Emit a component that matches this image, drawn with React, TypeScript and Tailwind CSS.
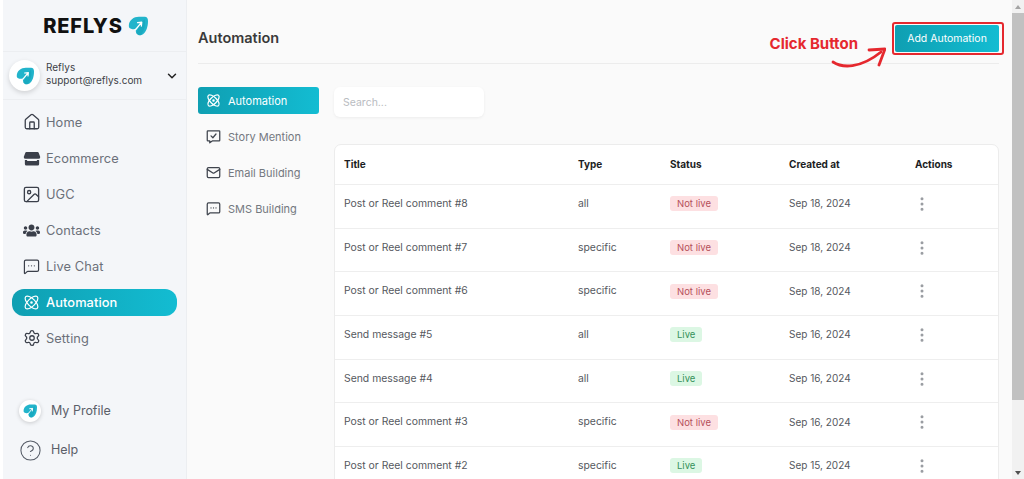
import React from 'react';
import { House, Image, MessageSquareMore, Atom, Settings, ChevronDown, Mail, CircleHelp, EllipsisVertical } from 'lucide-react';
import { FaUsers } from 'react-icons/fa';

const font = "font-['Inter','Noto_Sans',sans-serif]";

type IconProps = { size?: number; strokeWidth?: number; className?: string };

const Mark: React.FC<{ size: number }> = ({ size }) => (
  <svg width={size} height={size} viewBox="0 0 24 24">
    <path d="M1 12C1 5 7 1 13 1L20 1C23 1 24 3 24 6C24 13 22 19 18 22C15 24 10 23.500 9.500 19C9 16.500 9 16 10 15C8 16 6 16 4.500 15.500C2 15 1 14 1 12Z" fill="#22b4cb" />
    <path d="M14 10 20 3.500C21.500 11 19 18 15.500 23C13 23.500 10.500 22 9.800 20C11.500 17 13.500 14 14 10Z" fill="#0f9db3" opacity="0.45" />
    <path d="M9 16.500 16 8 M11.500 8 16.500 7.500 16 12" fill="none" stroke="#ffffff" strokeWidth="1.6" strokeLinecap="round" strokeLinejoin="round" />
  </svg>
);

const StoreIcon: React.FC<IconProps> = ({ size = 18, className }) => (
  <svg width={size} height={size} viewBox="0 0 24 24" fill="currentColor" className={className}>
    <path d="M4.500 4h15a1.500 1.500 0 0 1 1.400 1l2.100 5.500a2.500 2.500 0 0 1-2.500 2.500h-17a2.500 2.500 0 0 1-2.500-2.500L3.100 5a1.500 1.500 0 0 1 1.400-1z" />
    <path d="M2.500 14.500h3v1.500h13v-1.500h3V20a2 2 0 0 1-2 2h-15a2 2 0 0 1-2-2z" />
  </svg>
);

const StoryIcon: React.FC<IconProps> = ({ size = 15, strokeWidth = 2, className }) => (
  <svg width={size} height={size} viewBox="0 0 24 24" fill="none" stroke="currentColor" strokeWidth={strokeWidth} strokeLinecap="round" strokeLinejoin="round" className={className}>
    <path d="M2 4a1 1 0 0 1 1-1h18a1 1 0 0 1 1 1v14a1 1 0 0 1-1 1H10l-4 3v-3H3a1 1 0 0 1-1-1z" />
    <path d="m8 11 3 3 5-6" />
  </svg>
);

const UsersIcon: React.FC<IconProps> = ({ size = 17, className }) => <FaUsers size={size} className={className} />;

const navItems = [
  { label: 'Home', icon: House, size: 18 },
  { label: 'Ecommerce', icon: StoreIcon, size: 18 },
  { label: 'UGC', icon: Image, size: 19 },
  { label: 'Contacts', icon: UsersIcon, size: 17 },
  { label: 'Live Chat', icon: MessageSquareMore, size: 17 },
  { label: 'Automation', icon: Atom, size: 17, active: true },
  { label: 'Setting', icon: Settings, size: 18 },
];

const subItems = [
  { label: 'Automation', icon: Atom, active: true },
  { label: 'Story Mention', icon: StoryIcon },
  { label: 'Email Building', icon: Mail },
  { label: 'SMS Building', icon: MessageSquareMore },
];

const rows = [
  { title: 'Post or Reel comment #8', type: 'all', live: false, date: 'Sep 18, 2024' },
  { title: 'Post or Reel comment #7', type: 'specific', live: false, date: 'Sep 18, 2024' },
  { title: 'Post or Reel comment #6', type: 'specific', live: false, date: 'Sep 18, 2024' },
  { title: 'Send message #5', type: 'all', live: true, date: 'Sep 16, 2024' },
  { title: 'Send message #4', type: 'all', live: true, date: 'Sep 16, 2024' },
  { title: 'Post or Reel comment #3', type: 'specific', live: false, date: 'Sep 16, 2024' },
  { title: 'Post or Reel comment #2', type: 'specific', live: true, date: 'Sep 15, 2024' },
];

const Sidebar: React.FC = () => (
  <aside className="w-[184px] ml-[3px] shrink-0 bg-[#f4f6f9] border-r border-[#eceef1] flex flex-col">
    <div className="h-[52px] flex items-center justify-center gap-[5px] border-b border-[#eceef1] pt-[1px] pl-[2px]">
      <span className="text-[20px] font-extrabold tracking-[0.8px] text-[#111]">REFLYS</span>
      <Mark size={20} />
    </div>
    <div className="h-[48px] flex items-center border-b border-[#eceef1] pl-[6px] pr-[7px]">
      <div className="w-[31px] h-[31px] rounded-full bg-white shadow-[0_2px_5px_rgba(0,0,0,0.15)] flex items-center justify-center">
        <Mark size={18} />
      </div>
      <div className="ml-[6px] mb-[3px] flex-1 text-[10px] leading-[13px] text-[#3c3f46]">
        <div>Reflys</div>
        <div>support@reflys.com</div>
      </div>
      <ChevronDown size={14} strokeWidth={2.5} className="text-[#222]" />
    </div>
    <nav className="pt-[4px] px-[9px] flex flex-col">
      {navItems.map(({ label, icon: Icon, size, active }) => (
        <div
          key={label}
          className={`h-[36px] flex items-center ${active ? 'text-white' : 'text-[#6b7079]'}`}
        >
          <div className={`w-full h-[27px] flex items-center pl-[11px] gap-[6px] rounded-[12px] ${active ? 'bg-gradient-to-r from-[#0f9fb2] to-[#13bcd2] font-medium' : ''}`}>
            <div className="w-[17px] flex justify-center">
              <Icon size={size} strokeWidth={1.7} className={`shrink-0 ${active ? 'text-white' : 'text-[#3a3f4a]'}`} />
            </div>
            <span className="text-[12.8px] tracking-[0.1px] pt-[1px]">{label}</span>
          </div>
        </div>
      ))}
    </nav>
    <div className="mt-[43px] pl-[16px] flex flex-col">
      <div className="h-[24px] flex items-center gap-[10px] text-[12.5px] text-[#5b6069]">
        <div className="w-[22px] h-[22px] rounded-full bg-white shadow-[0_1px_4px_rgba(0,0,0,0.18)] flex items-center justify-center">
          <Mark size={14} />
        </div>
        My Profile
      </div>
      <div className="mt-[15px] h-[24px] flex items-center gap-[9px] text-[12.5px] text-[#5b6069]">
        <CircleHelp size={23} strokeWidth={1.1} className="text-[#555b66]" />
        Help
      </div>
    </div>
  </aside>
);

const App: React.FC = () => (
  <div className={`h-[479px] w-[1024px] overflow-hidden flex bg-white ${font}`}>
    <Sidebar />
    <main className="flex-1 bg-[#fafafa] pl-[11px] pr-[13px] min-w-0">
      <header className="h-[64px] border-b border-[#ececec] flex items-start justify-between">
        <h1 className="mt-[29px] text-[14.5px] leading-[18px] font-semibold text-[#3a3a3a]">Automation</h1>
        <div className="relative mt-[22px] mr-[-5px] pl-[1px] pr-[3px] py-[1px] border-2 border-[#e5282e] rounded-[3px]">
          <button className="block w-[104px] h-[27px] rounded-[2px] bg-gradient-to-r from-[#0f9fb2] to-[#13bcd2] text-white text-[10.5px]">
            Add Automation
          </button>
          <span className="absolute right-[144px] top-[9px] whitespace-nowrap text-[15px] font-bold text-[#e5282e]">Click Button</span>
          <svg className="absolute right-[116px] top-[21px]" width="56" height="28" viewBox="0 0 56 28">
            <path d="M3 17C12 23 30 24 51 7" fill="none" stroke="#e5282e" strokeWidth="2.800" strokeLinecap="round" />
            <path d="M39 5 55 4 49 20" fill="none" stroke="#e5282e" strokeWidth="2.800" strokeLinecap="round" strokeLinejoin="round" />
          </svg>
        </div>
      </header>
      <div className="flex mt-[23px]">
        <div className="w-[121px] shrink-0 flex flex-col">
          {subItems.map(({ label, icon: Icon, active }) => (
            <div key={label} className="h-[36px]">
              <div className={`h-[27px] rounded-[3px] flex items-center pl-[8px] gap-[7px] ${active ? 'bg-gradient-to-r from-[#0f9fb2] to-[#13bcd2] text-white' : 'text-[#74787f]'}`}>
                <Icon size={15} strokeWidth={2} className={active ? 'text-white' : 'text-[#3f444d]'} />
                <span className="text-[11px] pt-[1px]">{label}</span>
              </div>
            </div>
          ))}
        </div>
        <div className="ml-[15px] flex-1 min-w-0">
          <input
            placeholder="Search..."
            className="block w-[150px] h-[30px] rounded-[6px] bg-white px-[9px] text-[10.5px] shadow-[0_1px_3px_rgba(0,0,0,0.06)] outline-none placeholder:text-[#b9bcc1]"
          />
          <div className="mt-[27px] bg-white border border-[#ececec] rounded-[7px] text-[10.4px] text-[#55585e]">
            <div className="grid grid-cols-[234px_92px_119px_126px_1fr] h-[39px] items-center pl-[9px] font-bold text-[#1c1e24] text-[10px]">
              <div>Title</div>
              <div>Type</div>
              <div>Status</div>
              <div>Created at</div>
              <div>Actions</div>
            </div>
            {rows.map((r) => (
              <div key={r.title} className="grid grid-cols-[234px_92px_119px_126px_1fr] h-[43.7px] items-center pl-[9px] pb-[5px] border-t border-[#eeeeee]">
                <div>{r.title}</div>
                <div>{r.type}</div>
                <div>
                  <span className={`block w-fit h-[15px] leading-[15px] px-[7px] rounded-[3px] text-[9.5px] ${r.live ? 'bg-[#dcf7e4] text-[#35925a]' : 'bg-[#fde0e2] text-[#b5505a]'}`}>
                    {r.live ? 'Live' : 'Not live'}
                  </span>
                </div>
                <div className="text-[10px]">{r.date}</div>
                <div className="ml-[-2px]">
                  <EllipsisVertical size={18} strokeWidth={2} className="text-[#9a9da2]" />
                </div>
              </div>
            ))}
          </div>
        </div>
      </div>
    </main>
    <div className="w-[12px] shrink-0 bg-[#f1f1f1] flex flex-col items-center">
      <div className="h-[13px] w-full flex items-center justify-center">
        <div className="w-0 h-0 border-x-[3px] border-x-transparent border-b-[4px] border-b-[#a3a3a3]" />
      </div>
      <div className="w-full h-[387px] bg-[#c1c1c1]" />
      <div className="mt-auto h-[13px] w-full flex items-center justify-center">
        <div className="w-0 h-0 border-x-[3px] border-x-transparent border-t-[4px] border-t-[#505050]" />
      </div>
    </div>
  </div>
);

export default App;
